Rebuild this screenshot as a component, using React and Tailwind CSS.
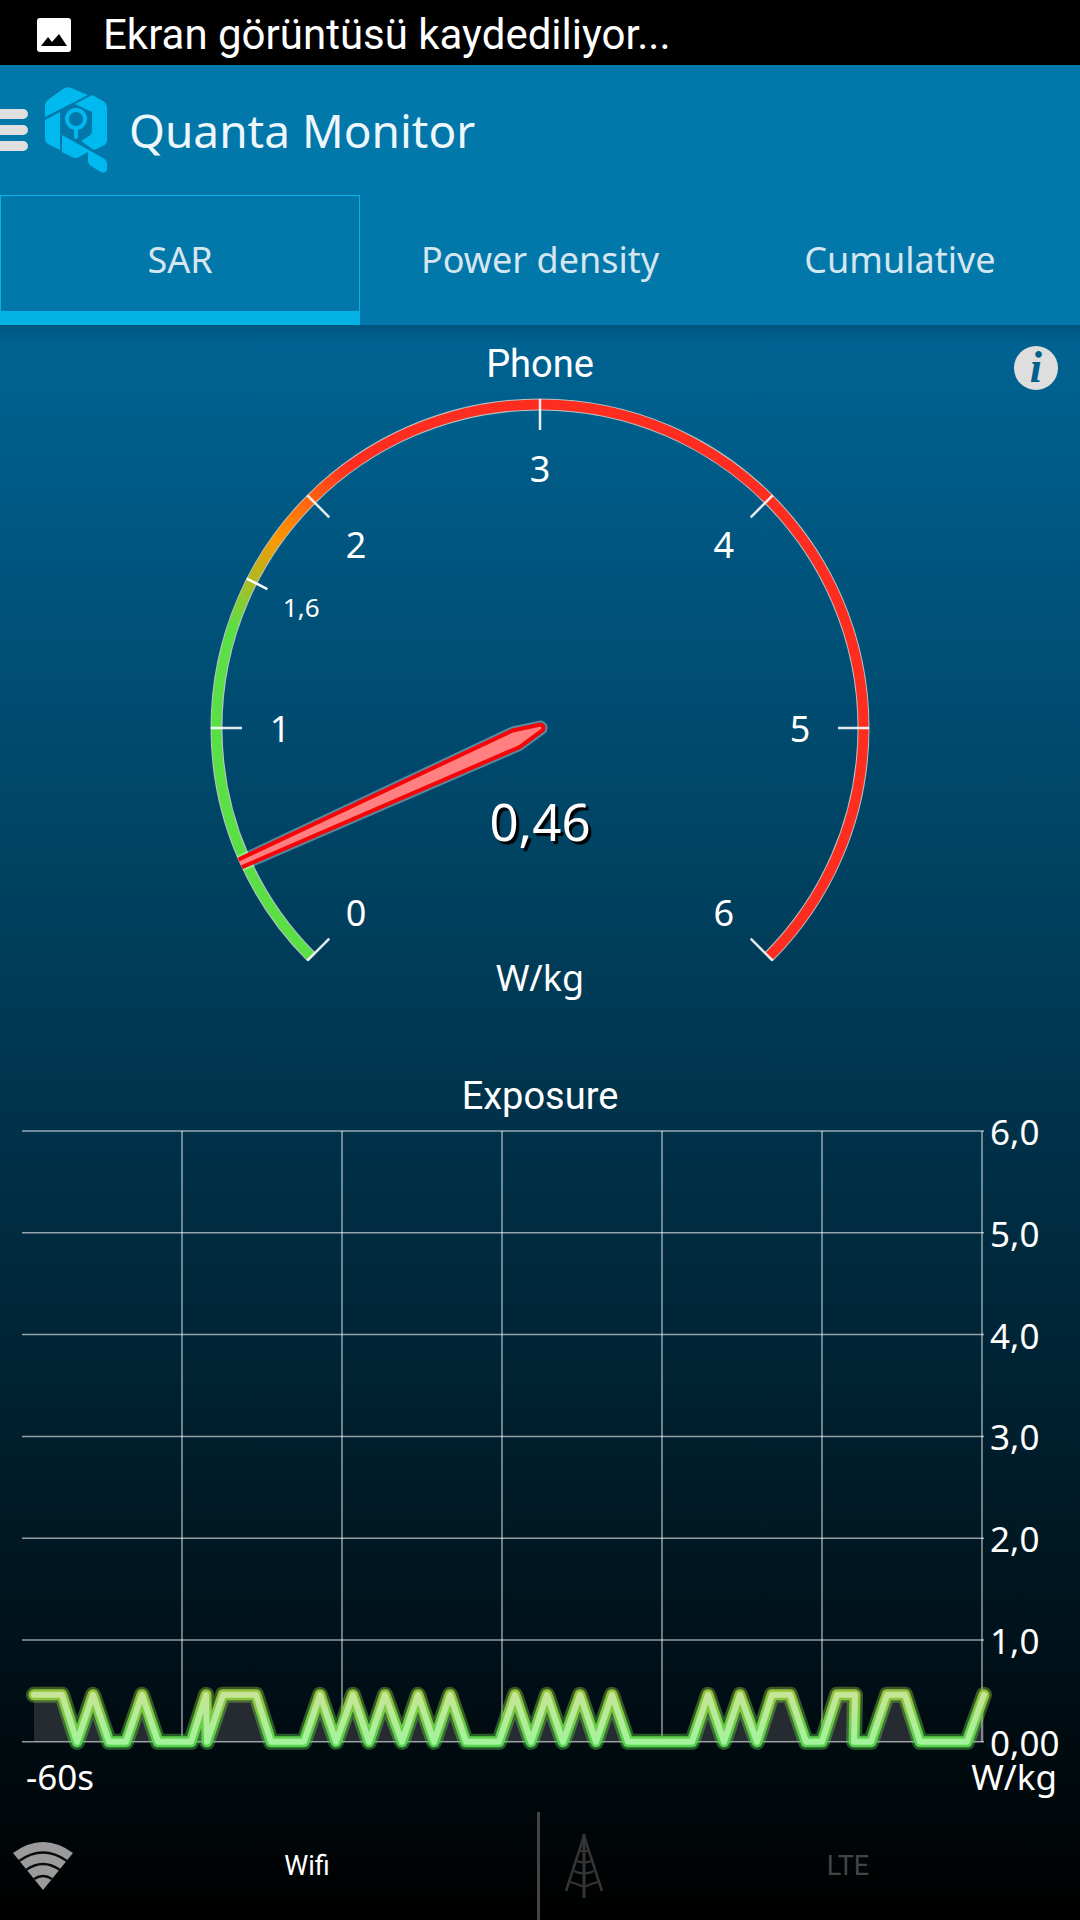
import React, { useState } from "react";

const TABS = ["SAR", "Power density", "Cumulative"];

// gauge: 0..6 W/kg over a 270 degree sweep, starting bottom left
const CX = 540;
const CY = 338;
const toRad = (value) => ((135 + value * 45) * Math.PI) / 180;
const polar = (value, r) => [CX + r * Math.cos(toRad(value)), CY + r * Math.sin(toRad(value))];

const arc = (from, to, r) => {
  const [x1, y1] = polar(from, r);
  const [x2, y2] = polar(to, r);
  return `M${x1} ${y1}A${r} ${r} 0 ${to - from > 4 ? 1 : 0} 1 ${x2} ${y2}`;
};

const COLOR_STOPS = [
  [0, [90, 224, 68]],
  [1.4, [90, 224, 68]],
  [1.8, [255, 150, 0]],
  [2.2, [255, 45, 32]],
  [6, [255, 45, 32]],
];

const colorAt = (value) => {
  const i = COLOR_STOPS.findIndex(([v], n) => n > 0 && value <= v);
  const [v0, c0] = COLOR_STOPS[i - 1];
  const [v1, c1] = COLOR_STOPS[i];
  const t = (value - v0) / (v1 - v0);
  return `rgb(${c0.map((c, n) => Math.round(c + (c1[n] - c) * t)).join(",")})`;
};

const BLEND = Array.from({ length: 40 }, (_, i) => 1.4 + i * 0.02);
const NEEDLE = "M-2 -3L26 -9L340 -4V4L26 9L-2 3Q-5 0 -2 -3Z";

function Gauge({ value }) {
  return (
    <svg viewBox="0 0 1080 640" className="block h-auto w-full" role="img" aria-label="Phone SAR">
      <defs>
        <clipPath id="dial">
          <circle cx={CX} cy={CY} r="329" />
        </clipPath>
      </defs>

      <path d={arc(0, 6, 323.5)} fill="none" stroke="#b4c4c6" strokeWidth="12" />
      <path d={arc(0, 1.41, 323.5)} fill="none" stroke="#5ae044" strokeWidth="10" />
      <path d={arc(2.19, 6, 323.5)} fill="none" stroke="#ff2d20" strokeWidth="10" />
      {BLEND.map((v) => (
        <path key={v} d={arc(v, v + 0.024, 323.5)} fill="none" stroke={colorAt(v + 0.01)} strokeWidth="10" />
      ))}

      {[0, 1, 2, 3, 4, 5, 6].map((v) => {
        const [x1, y1] = polar(v, 329);
        const [x2, y2] = polar(v, 298);
        const [tx, ty] = polar(v, 260);
        return (
          <g key={v}>
            <line x1={x1} y1={y1} x2={x2} y2={y2} stroke="#fff" strokeOpacity="0.9" strokeWidth="2.5" />
            <text x={tx} y={ty + 14} textAnchor="middle" fontSize="36" fill="#fff">
              {v}
            </text>
          </g>
        );
      })}
      <line x1={polar(1.6, 329)[0]} y1={polar(1.6, 329)[1]} x2={polar(1.6, 306)[0]} y2={polar(1.6, 306)[1]} stroke="#fff" strokeWidth="2.5" />
      <text x={polar(1.6, 268)[0]} y={polar(1.6, 268)[1] + 11} textAnchor="middle" fontSize="26" fill="#fff">
        1,6
      </text>

      <g clipPath="url(#dial)">
        <g transform={`translate(${CX} ${CY}) rotate(${135 + value * 45})`} strokeLinejoin="round">
          <path d={NEEDLE} fill="none" stroke="#fff" strokeOpacity="0.35" strokeWidth="8" />
          <path d={NEEDLE} fill="#ff8080" stroke="#f50408" strokeWidth="4" />
        </g>
      </g>

      <text x="540" y="451" textAnchor="middle" fontSize="51" fill="#fff" className="[text-shadow:3px_3px_1px_#000]">
        0,46
      </text>
      <text x="540" y="601" textAnchor="middle" fontSize="36" fill="#fff">
        W/kg
      </text>
    </svg>
  );
}

// exposure history, [x, 1 = peak / 0 = idle]
const SAMPLES = [
  [34, 1], [62, 1], [77, 0], [93, 1], [109, 0], [126, 0], [142, 1], [158, 0], [191, 0], [206, 1], [207, 0],
  [223, 1], [256, 1], [271, 0], [304, 0], [320, 1], [336, 0], [353, 1], [369, 0], [385, 1], [402, 0], [418, 1],
  [434, 0], [450, 1], [466, 0], [499, 0], [515, 1], [531, 0], [547, 1], [563, 0], [580, 1], [596, 0], [612, 1],
  [628, 0], [692, 0], [708, 1], [724, 0], [740, 1], [757, 0], [772, 1], [790, 1], [806, 0], [822, 0], [837, 1],
  [855, 1], [854, 0], [871, 0], [887, 1], [905, 1], [920, 0], [967, 0], [984, 1],
];

const GRID_TOP = 11;
const GRID_STEP = 101.8;
const BASE = GRID_TOP + GRID_STEP * 6;
const LINE = SAMPLES.map(([x, high]) => `${x},${high ? BASE - 47 : BASE}`).join(" ");
const Y_LABELS = ["6,0", "5,0", "4,0", "3,0", "2,0", "1,0", "0,00"];

function ExposureChart() {
  return (
    <svg viewBox="0 0 1080 692" className="block h-auto w-full overflow-visible" role="img" aria-label="Exposure over the last 60 seconds">
      <defs>
        <linearGradient id="edge" gradientUnits="userSpaceOnUse" x1="0" y1={BASE - 50} x2="0" y2={BASE}>
          <stop offset="0" stopColor="#94c43c" />
          <stop offset="1" stopColor="#58d24e" />
        </linearGradient>
        <linearGradient id="core" gradientUnits="userSpaceOnUse" x1="0" y1={BASE - 50} x2="0" y2={BASE}>
          <stop offset="0" stopColor="#c8e496" />
          <stop offset="1" stopColor="#a4f29c" />
        </linearGradient>
      </defs>

      <polygon points={`34,${BASE} ${LINE} 984,${BASE}`} fill="#252b31" />
      <g stroke="#fff" strokeOpacity="0.58" strokeWidth="1.5">
        {Y_LABELS.map((label, i) => (
          <line key={label} x1="22" x2="984" y1={GRID_TOP + i * GRID_STEP} y2={GRID_TOP + i * GRID_STEP} />
        ))}
        {[182, 342, 502, 662, 822, 982].map((x) => (
          <line key={x} x1={x} x2={x} y1={GRID_TOP} y2={BASE} />
        ))}
      </g>

      <g fill="none" strokeLinecap="round" strokeLinejoin="round">
        <polyline points={LINE} stroke="url(#edge)" strokeOpacity="0.4" strokeWidth="16" />
        <polyline points={LINE} stroke="url(#edge)" strokeWidth="11" />
        <polyline points={LINE} stroke="url(#core)" strokeWidth="6" />
      </g>

      <g fontSize="35" fill="#fff">
        {Y_LABELS.map((label, i) => (
          <text key={label} x="990" y={GRID_TOP + i * GRID_STEP + 14}>
            {label}
          </text>
        ))}
        <text x="26" y="670">
          -60s
        </text>
        <text x="1057" y="670" textAnchor="end">
          W/kg
        </text>
      </g>
    </svg>
  );
}

const PictureIcon = () => (
  <svg viewBox="0 0 34 34" className="h-[34px] w-[34px]" aria-hidden="true">
    <rect width="34" height="34" rx="3" fill="#fff" />
    <path d="M4 28L11 19L15 24L22 16L30 28Z" fill="#000" />
  </svg>
);

const Logo = () => (
  <svg viewBox="0 0 62 86" className="h-[86px] w-[62px]" aria-hidden="true">
    <g fill="#00b9ef">
      <path d="M0 30V19Q0 15 4 12L18 2Q22 -1 26 1L43 8Z" />
      <path d="M0 33L15 25V63L3 57Q0 55 0 51Z" />
      <path d="M47 8L58 14Q62 17 62 21V53Q62 57 58 59L49 63L36 54L44 49Q47 47 47 43V25L30 17Z" />
      <path d="M17 48L58 71Q62 73 62 77V82Q61 87 56 85L46 79Q43 77 43 73V65L34 70Q31 72 27 70L17 65Z" />
    </g>
    <circle cx="31" cy="32" r="9" fill="none" stroke="#00b9ef" strokeWidth="4" />
    <path d="M31 42V50" stroke="#00b9ef" strokeWidth="4" strokeLinecap="round" />
  </svg>
);

const WifiIcon = () => (
  <svg viewBox="0 0 60 48" className="h-12 w-[60px]" aria-hidden="true">
    <path d="M0 11Q30 -11 60 11L30 48Z" fill="#9b9b9b" />
    <g fill="none" stroke="#080b0d" strokeWidth="2.5">
      <path d="M6 19Q30 2 54 19M13 28Q30 16 47 28M21 37Q30 31 39 37" />
    </g>
  </svg>
);

const TowerIcon = () => (
  <svg viewBox="0 0 40 64" className="h-16 w-10" fill="none" stroke="#353535" aria-hidden="true">
    <path d="M20 0V64" strokeWidth="3" />
    <path d="M20 2L2 57M20 2L38 57" strokeWidth="2.5" />
    <path d="M16 17H24M13 27Q20 30 27 27M10 37Q20 42 30 37M6 48Q14 50 20 53Q26 50 34 48" strokeWidth="2" />
  </svg>
);

export default function App() {
  const [tab, setTab] = useState("SAR");

  return (
    <div className="flex min-h-screen flex-col bg-black font-['Noto_Sans','Open_Sans',sans-serif] text-white">
      <div className="flex h-[65px] items-center gap-8 pt-1 pl-[37px] font-[Roboto,sans-serif] text-[42px] leading-none">
        <PictureIcon />
        <span>Ekran görüntüsü kaydediliyor...</span>
      </div>

      <header className="bg-[#0277aa]">
        <div className="flex h-[130px] items-center">
          <button aria-label="Open menu" className="flex w-[45px] flex-col gap-1.5">
            <span className="h-2.5 w-7 rounded-r-full bg-[#e0e0e0]" />
            <span className="h-2.5 w-7 rounded-r-full bg-[#e0e0e0]" />
            <span className="h-2.5 w-7 rounded-r-full bg-[#e0e0e0]" />
          </button>
          <Logo />
          <h1 className="pl-[22px] text-[46px] leading-none text-[#edf6fa]">Quanta Monitor</h1>
        </div>

        <nav role="tablist" className="grid grid-cols-3">
          {TABS.map((name) => (
            <button
              key={name}
              role="tab"
              aria-selected={tab === name}
              onClick={() => setTab(name)}
              className={`h-[130px] border-x border-t border-b-[14px] pt-3 text-[36px] ${
                tab === name ? "border-[#05b2e5]" : "border-transparent"
              } text-[#d6e6ef]`}
            >
              {name}
            </button>
          ))}
        </nav>
      </header>

      <div className="flex flex-1 flex-col bg-linear-to-b/srgb from-[#006494] to-black">
        <main className="flex-1 bg-linear-to-b from-black/15 to-transparent to-[20px]">
          <section>
            <div className="grid h-[65px] grid-cols-3 items-end pr-[22px]">
              <h2 className="col-start-2 pl-[22px] text-center font-[Roboto,sans-serif] text-[38px] leading-[52px]">Phone</h2>
              <button
                aria-label="Information"
                className="flex h-11 w-11 items-center justify-center justify-self-end rounded-full bg-[#dedede] font-['Liberation_Serif',serif] text-[44px] leading-none font-bold text-[#01608d] italic"
              >
                i
              </button>
            </div>
            <Gauge value={0.46} />
          </section>

          <section className="pt-9">
            <h2 className="h-[54px] text-center font-[Roboto,sans-serif] text-[38px] leading-[60px]">Exposure</h2>
            <ExposureChart />
          </section>
        </main>

        <footer className="grid h-[108px] grid-cols-2 font-[Roboto,sans-serif] text-[27px]">
          <div className="flex items-center border-r-[3px] border-[#444] pl-[13px]">
            <WifiIcon />
            <span className="flex-1 pl-1 text-center">Wifi</span>
          </div>
          <div className="flex items-center pl-6 text-[#444]">
            <TowerIcon />
            <span className="flex-1 pl-3 text-center">LTE</span>
          </div>
        </footer>
      </div>
    </div>
  );
}
